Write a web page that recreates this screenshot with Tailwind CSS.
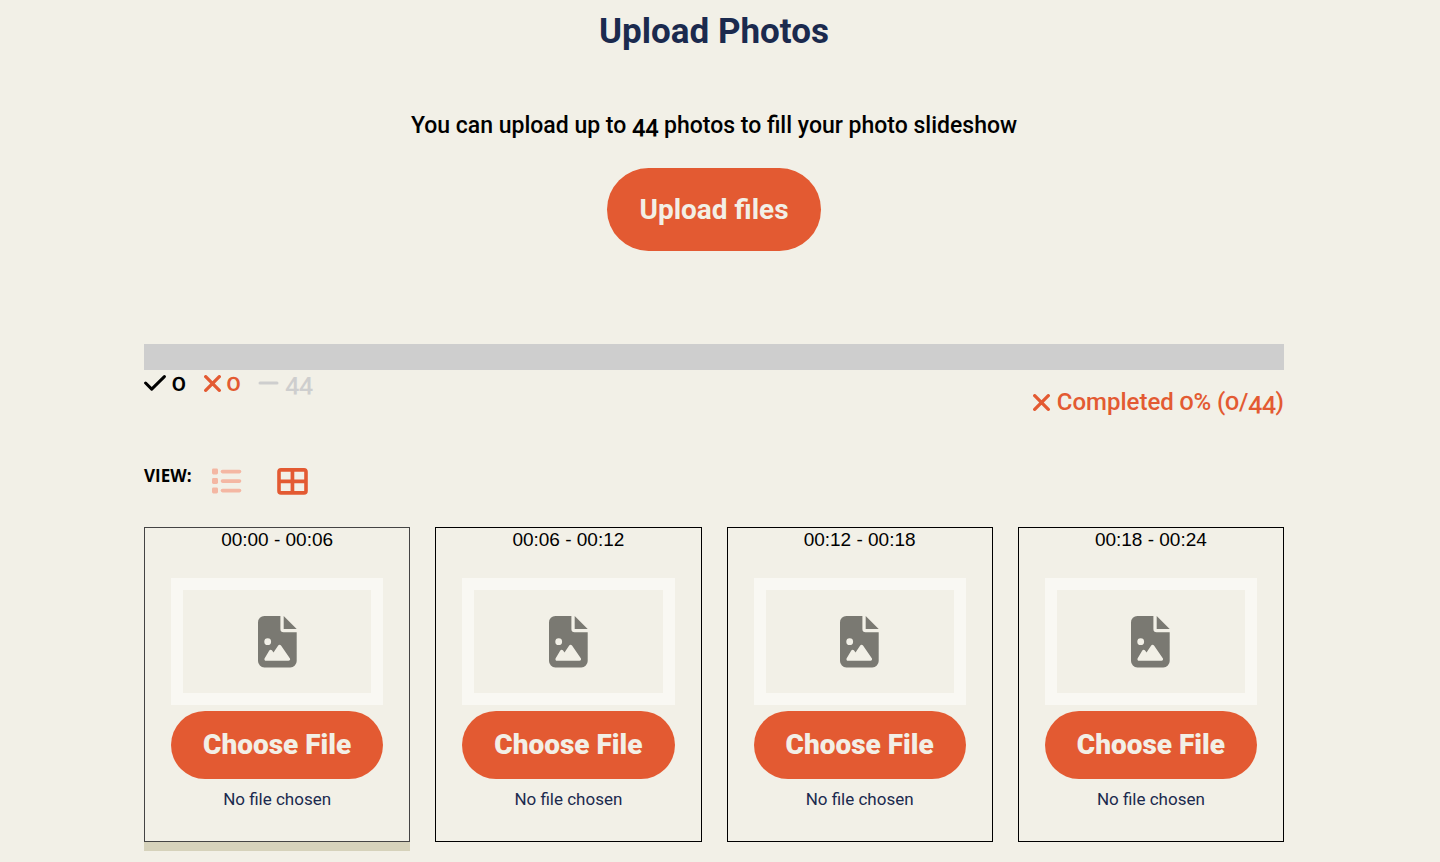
<!DOCTYPE html>
<html lang="en">
<head>
    <meta charset="UTF-8">
    <meta name="viewport" content="width=device-width, initial-scale=1.0">
    <title>Upload Photos</title>
    <script src="https://cdn.jsdelivr.net/npm/@tailwindcss/browser@4"></script>
</head>
<body class="bg-[#f2f0e7] font-['Roboto',sans-serif] text-black oldstyle-nums">
    <!-- shared icons -->
    <svg class="hidden">
        <symbol id="icon-x" viewBox="0 0 16 16">
            <path d="M1.6 1.6 14.4 14.4M14.4 1.6 1.6 14.4" fill="none" stroke="currentColor" stroke-width="3.1" stroke-linecap="round"/>
        </symbol>
        <symbol id="icon-image" viewBox="0 0 39 52">
            <path fill="currentColor" fill-rule="evenodd" d="M6.4 0H22.4V13a3.2 3.2 0 0 0 3.2 3.2H38.7V45a6.4 6.4 0 0 1-6.4 6.4H6.4A6.4 6.4 0 0 1 0 45V6.4A6.4 6.4 0 0 1 6.4 0ZM9.7 22.3a3.4 3.4 0 1 0 0 6.8 3.4 3.4 0 0 0 0-6.8ZM23 29.5a1.7 1.7 0 0 0-2.8 0L15.5 36.4 14.1 34.5a1.7 1.7 0 0 0-2.8 0L6.7 42.3a1.6 1.6 0 0 0 1.3 2.5H30.4a1.6 1.6 0 0 0 1.4-2.5Z"/>
            <path fill="currentColor" d="M25.7 0 38.7 12.9H25.7Z"/>
        </symbol>
    </svg>

    <main class="pl-36 pr-39">
        <h1 class="pt-2 text-center text-[35px] leading-12 font-bold text-[#1b2a4e]">Upload Photos</h1>
        <p class="mt-[54px] text-center text-[23px] leading-8 font-medium">You can upload up to <strong class="font-semibold">44</strong> photos to fill your photo slideshow</p>
        <div class="mt-[26px] flex justify-center">
            <button type="button" class="rounded-full bg-[#e35a32] px-8 py-5 text-[28px] leading-[43px] font-bold text-[#f2efe6]">Upload files</button>
        </div>

        <div class="mt-[93px] h-[26px] bg-[#cecece]" role="progressbar" aria-label="Completed" aria-valuenow="0" aria-valuemin="0" aria-valuemax="44"></div>
        <div class="flex justify-between text-2xl font-medium">
            <div class="flex h-[26px] items-center gap-[18px]">
                <span class="flex items-center gap-1.5">
                    <svg class="h-4 w-[22px]" viewBox="0 0 22 16" fill="none" stroke="currentColor" stroke-width="3" stroke-linecap="round" stroke-linejoin="round"><path d="M1.6 8 7.7 14.1 20.4 1.6"/></svg>
                    0
                </span>
                <span class="flex items-center gap-1.5 text-[#e35a32]">
                    <svg class="size-[17px]"><use href="#icon-x"/></svg>
                    0
                </span>
                <span class="flex items-center gap-1.5 text-[#cecece]">
                    <svg class="h-4 w-[21px]" viewBox="0 0 21 16" fill="none" stroke="currentColor" stroke-width="3" stroke-linecap="round"><path d="M2 8H19"/></svg>
                    44
                </span>
            </div>
            <p class="mt-4 flex items-center gap-[7px] leading-8 text-[#e35a32]">
                <svg class="size-[17px]"><use href="#icon-x"/></svg>
                Completed 0% (0/44)
            </p>
        </div>

        <div class="mt-[47px] flex h-8 items-center">
            <span class="mb-2.5 font-['Open_Sans',sans-serif] text-[17px] leading-6 font-bold">VIEW:</span>
            <button type="button" aria-label="List view" class="ml-[21px] text-[#f4b7a3]">
                <svg class="h-[26px] w-[30px]" viewBox="0 0 30 26" fill="currentColor">
                    <rect x="0" y="0.5" width="6" height="6" rx="1.4"/><rect x="0" y="10" width="6" height="6" rx="1.4"/><rect x="0" y="19.5" width="6" height="6" rx="1.4"/>
                    <rect x="8.7" y="1.7" width="20.6" height="3.7" rx="1.8"/><rect x="8.7" y="11.2" width="20.6" height="3.7" rx="1.8"/><rect x="8.7" y="20.7" width="20.6" height="3.7" rx="1.8"/>
                </svg>
            </button>
            <button type="button" aria-label="Grid view" class="ml-[35px] text-[#e35a32]">
                <svg class="h-[27px] w-[31px]" viewBox="0 0 31 27" fill="currentColor">
                    <path fill-rule="evenodd" d="M4 0H27a3.8 3.8 0 0 1 3.8 3.8V23A3.8 3.8 0 0 1 27 26.8H4A3.8 3.8 0 0 1 .2 23V3.8A3.8 3.8 0 0 1 4 0ZM3.8 3.7V11.4H13.6V3.7ZM17.3 3.7V11.4H27.2V3.7ZM3.8 15.2V23H13.6V15.2ZM17.3 15.2V23H27.2V15.2Z"/>
                </svg>
            </button>
        </div>

        <div class="mt-[30px] grid grid-cols-4 gap-[25px] pb-10 text-center">
            <section class="border border-[#444] px-[26px] pb-[30px] [box-shadow:0_9px_0_0_#d6d2bb]">
                <h2 class="font-['Liberation_Sans',sans-serif] text-[19px] leading-6 lining-nums">00:00 - 00:06</h2>
                <div class="mt-[26px] flex h-[127px] items-center justify-center border-12 border-[#f9f8f3] text-[#7a7972]">
                    <svg class="h-[52px] w-[39px]"><use href="#icon-image"/></svg>
                </div>
                <label for="photo-1" class="mt-1.5 block cursor-pointer rounded-full bg-[#e35a32] py-3 text-[28px] leading-11 font-black text-[#f2efe6]">Choose File</label>
                <input type="file" id="photo-1" accept="image/*" class="sr-only">
                <p class="mt-2 text-[17px] leading-6 text-[#1b2a4e]">No file chosen</p>
            </section>
            <section class="border border-black px-[26px] pb-[30px]">
                <h2 class="font-['Liberation_Sans',sans-serif] text-[19px] leading-6 lining-nums">00:06 - 00:12</h2>
                <div class="mt-[26px] flex h-[127px] items-center justify-center border-12 border-[#f9f8f3] text-[#7a7972]">
                    <svg class="h-[52px] w-[39px]"><use href="#icon-image"/></svg>
                </div>
                <label for="photo-2" class="mt-1.5 block cursor-pointer rounded-full bg-[#e35a32] py-3 text-[28px] leading-11 font-black text-[#f2efe6]">Choose File</label>
                <input type="file" id="photo-2" accept="image/*" class="sr-only">
                <p class="mt-2 text-[17px] leading-6 text-[#1b2a4e]">No file chosen</p>
            </section>
            <section class="border border-black px-[26px] pb-[30px]">
                <h2 class="font-['Liberation_Sans',sans-serif] text-[19px] leading-6 lining-nums">00:12 - 00:18</h2>
                <div class="mt-[26px] flex h-[127px] items-center justify-center border-12 border-[#f9f8f3] text-[#7a7972]">
                    <svg class="h-[52px] w-[39px]"><use href="#icon-image"/></svg>
                </div>
                <label for="photo-3" class="mt-1.5 block cursor-pointer rounded-full bg-[#e35a32] py-3 text-[28px] leading-11 font-black text-[#f2efe6]">Choose File</label>
                <input type="file" id="photo-3" accept="image/*" class="sr-only">
                <p class="mt-2 text-[17px] leading-6 text-[#1b2a4e]">No file chosen</p>
            </section>
            <section class="border border-black px-[26px] pb-[30px]">
                <h2 class="font-['Liberation_Sans',sans-serif] text-[19px] leading-6 lining-nums">00:18 - 00:24</h2>
                <div class="mt-[26px] flex h-[127px] items-center justify-center border-12 border-[#f9f8f3] text-[#7a7972]">
                    <svg class="h-[52px] w-[39px]"><use href="#icon-image"/></svg>
                </div>
                <label for="photo-4" class="mt-1.5 block cursor-pointer rounded-full bg-[#e35a32] py-3 text-[28px] leading-11 font-black text-[#f2efe6]">Choose File</label>
                <input type="file" id="photo-4" accept="image/*" class="sr-only">
                <p class="mt-2 text-[17px] leading-6 text-[#1b2a4e]">No file chosen</p>
            </section>
        </div>
    </main>
</body>
</html>
